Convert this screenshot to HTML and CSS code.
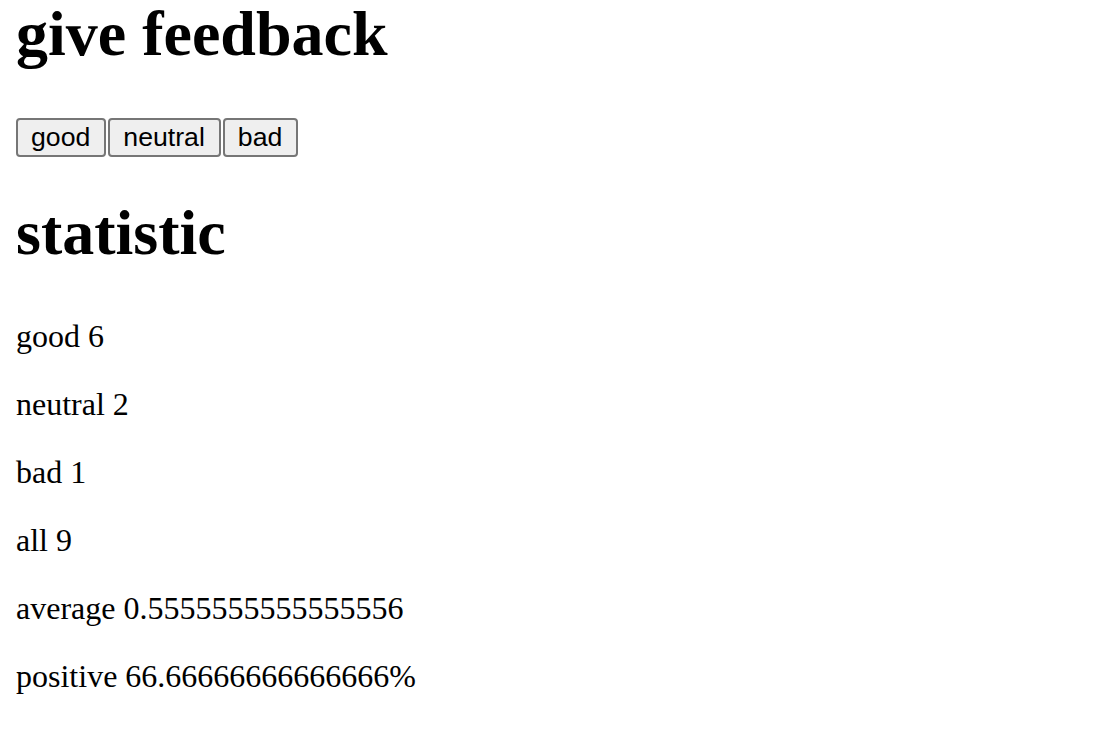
FILE: index.html
```html
<!DOCTYPE html>
<html>
<head>
<meta charset="utf-8">
<link rel="stylesheet" href="styles.css">
</head>
<body>
<div class="app">
<h1 class="title first">give feedback</h1>
<div class="buttons"><button class="btn">good</button><button class="btn">neutral</button><button class="btn">bad</button></div>
<h1 class="title second">statistic</h1>
<p class="stat">good 6</p>
<p class="stat">neutral 2</p>
<p class="stat">bad 1</p>
<p class="stat">all 9</p>
<p class="stat">average 0.5555555555555556</p>
<p class="stat">positive 66.66666666666666%</p>
</div>
</body>
</html>
```
FILE: styles.css
```css
html, body {
  margin: 0;
  padding: 0;
  background: #ffffff;
}
body {
  font-family: "Liberation Serif", "Times New Roman", serif;
  font-size: 32px;
  color: #000000;
}
.app {
  padding: 0 16px;
}
.title {
  font-size: 64px;
  font-weight: bold;
  margin: 42.88px 0;
}
.title.first {
  margin-top: -3px;
  margin-bottom: 46.88px;
}
.title.second {
  margin-top: 38.88px;
  margin-bottom: 48px;
}
.buttons {
  display: flex;
  gap: 2px;
}
.btn {
  font-family: "Liberation Sans", Arial, Helvetica, sans-serif;
  font-size: 26.67px;
  color: #000000;
  background: #efefef;
  border: 2px solid #767676;
  border-radius: 4px;
  padding: 2px 14px 2px 13px;
  margin: 0;
}
.stat {
  margin: 32px 0;
  line-height: 36px;
}
```
